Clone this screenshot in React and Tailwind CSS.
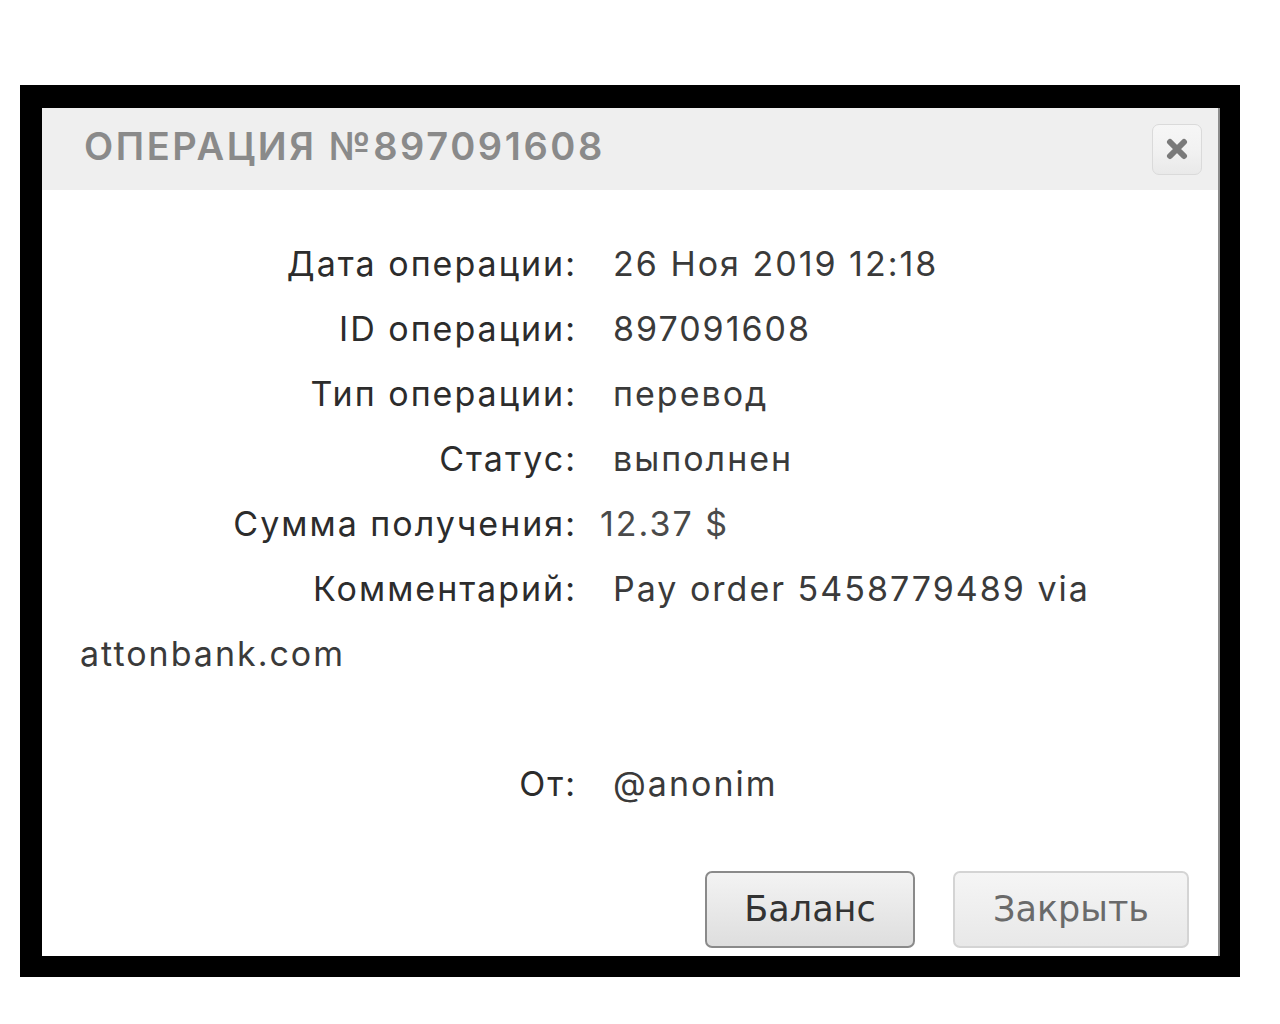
import React from "react";

const rows = [
  ["Дата операции:", "26 Ноя 2019 12:18"],
  ["ID операции:", "897091608"],
  ["Тип операции:", "перевод"],
  ["Статус:", "выполнен"],
  ["Сумма получения:", "12.37 $"],
  ["Комментарий:", "Pay order 5458779489 via"],
];

function Row({ label, value, shift }) {
  return (
    <div className="flex h-[65px] items-center">
      <div className="w-[497px] shrink-0 text-right text-[#2c2c2c]">{label}</div>
      <div className={shift ? "ml-[23px] text-[#4a4a4a]" : "ml-[36px] text-[#3a3a3a]"}>{value}</div>
    </div>
  );
}

export default function App() {
  return (
    <div className="w-[1280px] h-[1024px] bg-white pt-[85px] pl-[20px]">
      <div className="w-[1220px] h-[892px] bg-black pt-[23px] pl-[22px] pr-[20px] pb-[21px]">
        <div className="h-[848px] bg-white border-r-2 border-[#8c8c8c] flex flex-col">
          <div className="h-[82px] bg-[#efefef] flex items-center justify-between pl-[42px] pr-[16px]">
            <div
              className="text-[#8a8a8a] font-semibold text-[38px] tracking-[2.6px] pb-[6px]"
              style={{ fontFamily: "Inter, sans-serif" }}
            >
              ОПЕРАЦИЯ №897091608
            </div>
            <div className="w-[50px] h-[51px] rounded-[7px] border border-[#dadada] bg-gradient-to-b from-[#f6f6f6] via-[#f2f2f2] to-[#e9e9e9] flex items-center justify-center">
              <svg width="22" height="22" viewBox="0 0 22 22">
                <path d="M4 4 L18 18 M18 4 L4 18" stroke="#7a7a7a" strokeWidth="6" strokeLinecap="round" />
              </svg>
            </div>
          </div>
          <div
            className="flex-1 pt-[41px] pl-[38px] text-[34px] leading-[65px] tracking-[2px]"
            style={{ fontFamily: "Inter, sans-serif" }}
          >
            {rows.map(([l, v]) => (
              <Row key={l} label={l} value={v} shift={l === "Сумма получения:"} />
            ))}
            <div className="h-[65px] flex items-center text-[#3a3a3a]">attonbank.com</div>
            <div className="h-[65px]" />
            <Row label="От:" value="@anonim" />
          </div>
          <div
            className="flex justify-end gap-[38px] pr-[29px] pb-[8px] text-[35px]"
            style={{ fontFamily: '"DejaVu Sans", sans-serif' }}
          >
            <button className="w-[210px] h-[77px] rounded-[7px] border-2 border-[#8a8a8a] bg-gradient-to-b from-[#f3f3f3] to-[#dedede] text-[#333]">
              Баланс
            </button>
            <button className="w-[236px] h-[77px] rounded-[7px] border-2 border-[#d4d4d4] bg-gradient-to-b from-[#f5f5f5] to-[#e8e8e8] text-[#6a6a6a]">
              Закрыть
            </button>
          </div>
        </div>
      </div>
    </div>
  );
}
